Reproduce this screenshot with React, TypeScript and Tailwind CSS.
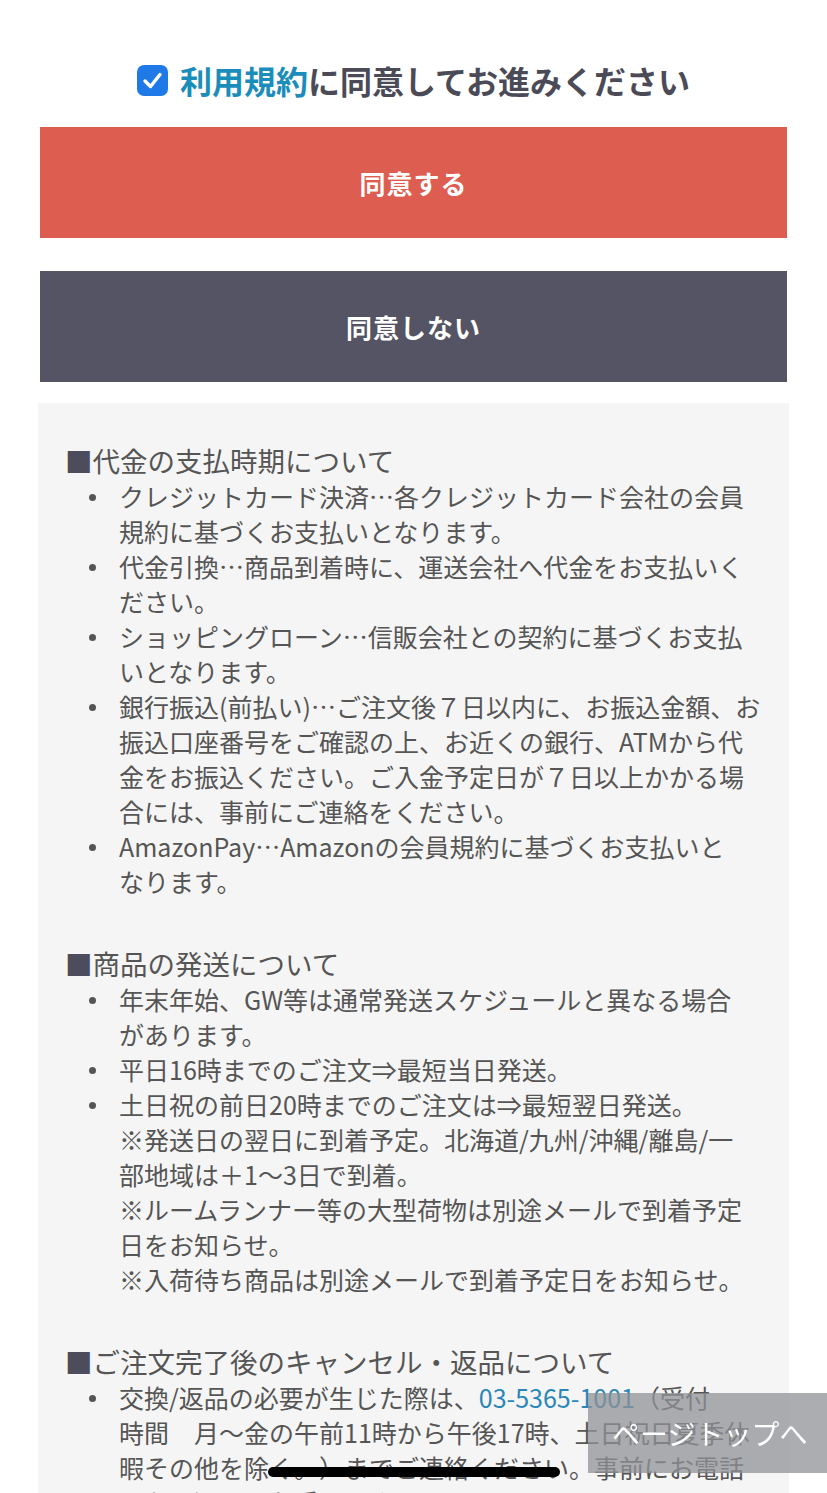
import React from 'react';

const font = { fontFamily: '"Noto Sans CJK JP", "Noto Sans", sans-serif' };

const Bullet = ({ children }: { children: React.ReactNode }) => (
    <li className="flex">
        <span className="w-[30px] shrink-0 pt-[15px]">
            <span className="block w-[7px] h-[7px] rounded-full bg-[#555]" />
        </span>
        <span className="flex-1">{children}</span>
    </li>
);

const Section = ({ title, first, children }: { title: string; first?: boolean; children: React.ReactNode }) => (
    <div className={first ? '' : 'mt-[46px]'}>
        <h3 className="text-[27.5px] leading-[37px] text-[#555]">
            <span className="text-[#4c4c5c]">■</span>
            {title}
        </h3>
        <ul className="pl-[24px]">{children}</ul>
    </div>
);

export default function App() {
    return (
        <div lang="ja" className="bg-white min-h-screen [text-spacing-trim:space-all]" style={font}>
            <div className="px-[40px] pt-[56px]">
                <div className="flex items-center justify-center gap-[12px] h-[48px]">
                    <svg width="31" height="31" viewBox="0 0 31 31" className="shrink-0">
                        <rect x="0" y="0" width="31" height="31" rx="7" fill="#1f7ae8" />
                        <path d="M8 16 L13.5 21.5 L23 9.5" stroke="white" strokeWidth="3.4" fill="none" strokeLinecap="round" strokeLinejoin="round" />
                    </svg>
                    <p className="text-[32px] font-bold text-[#4b4b58]">
                        <span className="text-[#1b8dbb]">利用規約</span>に同意してお進みください
                    </p>
                </div>

                <button className="mt-[23px] w-full h-[111px] bg-[#dd5d50] text-white text-[26px] font-bold tracking-[1px]">
                    同意する
                </button>
                <button className="mt-[33px] w-full h-[111px] bg-[#545464] text-white text-[26px] font-bold tracking-[1px]">
                    同意しない
                </button>
            </div>

            <div className="mx-[38px] mt-[21px] bg-[#f5f5f5] pl-[27px] pr-[23px] pt-[39px] pb-[80px] text-[25px] leading-[35px] text-[#555]">
                <Section title="代金の支払時期について" first>
                    <Bullet>クレジットカード決済…各クレジットカード会社の会員規約に基づくお支払いとなります。</Bullet>
                    <Bullet>代金引換…商品到着時に、運送会社へ代金をお支払いください。</Bullet>
                    <Bullet>ショッピングローン…信販会社との契約に基づくお支払いとなります。</Bullet>
                    <Bullet>銀行振込(前払い)…ご注文後７日以内に、お振込金額、お振込口座番号をご確認の上、お近くの銀行、ATMから代金をお振込ください。ご入金予定日が７日以上かかる場合には、事前にご連絡をください。</Bullet>
                    <Bullet>
                        AmazonPay…Amazonの会員規約に基づくお支払いと
                        <br />
                        なります。
                    </Bullet>
                </Section>

                <Section title="商品の発送について">
                    <Bullet>
                        年末年始、GW等は通常発送スケジュールと異なる場合
                        <br />
                        があります。
                    </Bullet>
                    <Bullet>平日16時までのご注文⇒最短当日発送。</Bullet>
                    <Bullet>
                        土日祝の前日20時までのご注文は⇒最短翌日発送。
                        <br />
                        ※発送日の翌日に到着予定。北海道/九州/沖縄/離島/一
                        <br />
                        部地域は＋1～3日で到着。
                        <br />
                        ※ルームランナー等の大型荷物は別途メールで到着予定日をお知らせ。
                        <br />
                        ※入荷待ち商品は別途メールで到着予定日をお知らせ。
                    </Bullet>
                </Section>

                <Section title="ご注文完了後のキャンセル・返品について">
                    <Bullet>
                        交換/返品の必要が生じた際は、<span className="text-[#2a86b8]">03-5365-1001</span>（受付
                        <br />
                        時間　月～金の午前11時から午後17時、土日祝日夏季休暇その他を除く。）までご連絡ください。事前にお電話のない返品はお受けできません。
                    </Bullet>
                </Section>
            </div>

            <div className="fixed right-0 bottom-[20px] w-[239px] h-[80px] bg-[#8f9196]/75 flex items-center pl-[24px] text-white text-[28px]">
                ページトップへ
            </div>
            <div className="fixed bottom-[16px] left-[268px] w-[292px] h-[10px] rounded-full bg-black" />
        </div>
    );
}
